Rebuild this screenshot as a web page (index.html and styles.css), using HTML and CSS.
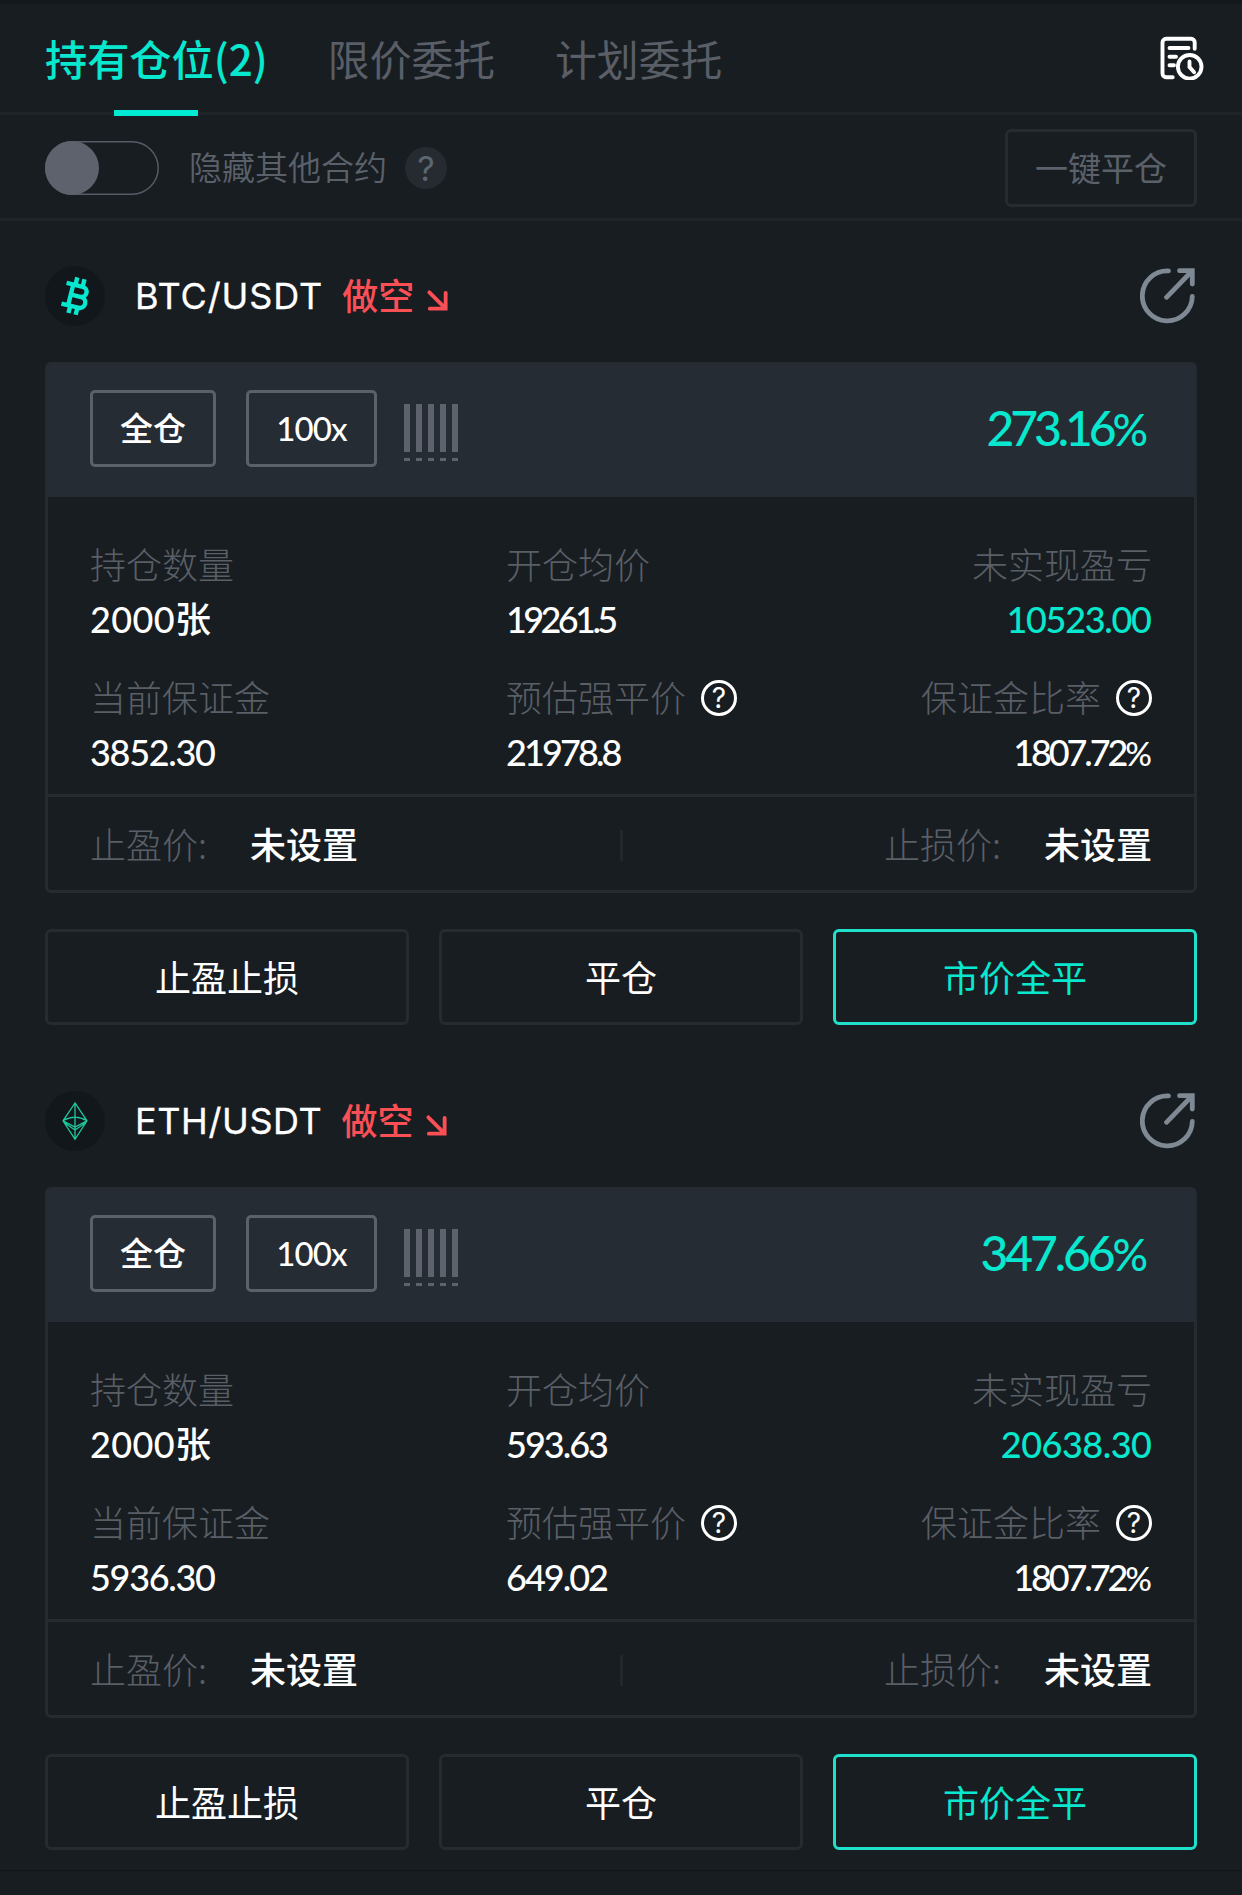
FILE: index.html
```
<!DOCTYPE html>
<html lang="zh-CN">
<head>
<meta charset="utf-8">
<title>持有仓位</title>
<link rel="stylesheet" href="styles.css">
</head>
<body>
<svg class="defs" width="0" height="0" aria-hidden="true">
  <symbol id="share" viewBox="0 0 56 56">
    <path d="M52.3 28.5A25 25 0 1 1 28.5 2.9M39.5 2.7h12.8V16M26.5 29.3L51.5 3.5"/>
  </symbol>
  <symbol id="down" viewBox="0 0 24 24">
    <path d="M3.5 3.5L20 20M20.5 4v16.5H4"/>
  </symbol>
  <symbol id="meter" viewBox="0 0 54 57">
    <path d="M3 0v48M15 0v48M27 0v48M39 0v48M51 0v48M3 54v3M15 54v3M27 54v3M39 54v3M51 54v3"/>
  </symbol>
</svg>

<header class="tabs">
  <nav class="tab-list">
    <a class="tab tab--active">持有仓位(2)</a>
    <a class="tab">限价委托</a>
    <a class="tab">计划委托</a>
  </nav>
  <svg class="history" viewBox="0 0 44 44">
    <path d="M34.7 12.8V6.4a3.6 3.6 0 0 0-3.6-3.6H6.1a3.6 3.6 0 0 0-3.6 3.6v31.2a3.6 3.6 0 0 0 3.6 3.6h6.6M9.5 12h19M9.5 20.8h6.5M9.5 29.3h4.5M29.5 25.5V31l4.6 5.3"/>
    <circle cx="29.7" cy="30.8" r="11.8"/>
  </svg>
</header>

<div class="toolbar">
  <span class="switch"><span class="knob"></span></span>
  <span class="toolbar-label">隐藏其他合约</span>
  <span class="hint">?</span>
  <button class="close-all">一键平仓</button>
</div>

<main>
  <section class="position">
    <div class="head">
      <svg class="coin" viewBox="0 0 60 60">
        <circle class="coin-bg" cx="30" cy="30" r="30"/>
        <g class="btc" transform="translate(1.2 0) rotate(14 30.5 30)">
          <path d="M17.5 19.6h16.6a5.1 5.1 0 0 1 0 10.3H25M34 29.9h1.7a5.6 5.6 0 0 1 0 11.1H17.5M24.4 19.6V41M26.6 11.8V20M34 11.8V20M26.6 40v8.4M34 40v8.4"/>
        </g>
      </svg>
      <span class="pair">BTC/USDT</span>
      <span class="side">做空</span>
      <svg class="side-arrow"><use href="#down"/></svg>
      <svg class="share"><use href="#share"/></svg>
    </div>
    <div class="card">
      <div class="card-top">
        <span class="badge">全仓</span>
        <span class="badge badge--lever">100x</span>
        <svg class="meter"><use href="#meter"/></svg>
        <span class="rate num tight-6">273.16<span class="pct">%</span></span>
      </div>
      <div class="stats">
        <div class="stat"><span class="label">持仓数量</span><span class="value num loose">2000张</span></div>
        <div class="stat"><span class="label">开仓均价</span><span class="value num tight-5">19261.5</span></div>
        <div class="stat stat--end"><span class="label">未实现盈亏</span><span class="value num gain tight-1">10523.00</span></div>
        <div class="stat"><span class="label">当前保证金</span><span class="value num tight-1">3852.30</span></div>
        <div class="stat"><span class="label">预估强平价<i class="help">?</i></span><span class="value num tight-3">21978.8</span></div>
        <div class="stat stat--end"><span class="label">保证金比率<i class="help">?</i></span><span class="value num tight-4">1807.72<span class="pct">%</span></span></div>
      </div>
      <div class="limits">
        <span class="limit-label">止盈价:</span><b class="limit-value">未设置</b>
        <i class="sep"></i>
        <span class="limit-label">止损价:</span><b class="limit-value">未设置</b>
      </div>
    </div>
    <div class="actions">
      <button class="btn">止盈止损</button>
      <button class="btn">平仓</button>
      <button class="btn btn--primary">市价全平</button>
    </div>
  </section>

  <section class="position">
    <div class="head">
      <svg class="coin" viewBox="0 0 60 60">
        <circle class="coin-bg" cx="30" cy="30" r="30"/>
        <path class="eth" d="M30 12L18 29.8L30 48.3L42 29.8ZM30 12V48.3M18 29.8Q30 22.5 42 29.8M18 29.8L30 36L42 29.8M19 31.5L30 39L41 31.5"/>
      </svg>
      <span class="pair pair--eth">ETH/USDT</span>
      <span class="side">做空</span>
      <svg class="side-arrow"><use href="#down"/></svg>
      <svg class="share"><use href="#share"/></svg>
    </div>
    <div class="card">
      <div class="card-top">
        <span class="badge">全仓</span>
        <span class="badge badge--lever">100x</span>
        <svg class="meter"><use href="#meter"/></svg>
        <span class="rate num tight-4">347.66<span class="pct">%</span></span>
      </div>
      <div class="stats">
        <div class="stat"><span class="label">持仓数量</span><span class="value num loose">2000张</span></div>
        <div class="stat"><span class="label">开仓均价</span><span class="value num tight-2">593.63</span></div>
        <div class="stat stat--end"><span class="label">未实现盈亏</span><span class="value num gain tight-0">20638.30</span></div>
        <div class="stat"><span class="label">当前保证金</span><span class="value num tight-1">5936.30</span></div>
        <div class="stat"><span class="label">预估强平价<i class="help">?</i></span><span class="value num tight-2">649.02</span></div>
        <div class="stat stat--end"><span class="label">保证金比率<i class="help">?</i></span><span class="value num tight-4">1807.72<span class="pct">%</span></span></div>
      </div>
      <div class="limits">
        <span class="limit-label">止盈价:</span><b class="limit-value">未设置</b>
        <i class="sep"></i>
        <span class="limit-label">止损价:</span><b class="limit-value">未设置</b>
      </div>
    </div>
    <div class="actions">
      <button class="btn">止盈止损</button>
      <button class="btn">平仓</button>
      <button class="btn btn--primary">市价全平</button>
    </div>
  </section>
</main>
<footer class="bottom"></footer>
</body>
</html>
```
FILE: styles.css
```
:root {
  --bg: #181d21;
  --panel: #262c33;
  --line: #262b31;
  --muted: #5a5f67;
  --muted-2: #5b616b;
  --teal: #07e8cf;
  --red: #fb4f56;
  --cjk: "Noto Sans CJK SC", sans-serif;
}
* { box-sizing: border-box; }
body {
  margin: 0;
  background: var(--bg);
  color: #fff;
  font-family: var(--cjk);
  font-size: 36px;
  border-top: 4px solid #14181c;
  height: 1895px;
  overflow: hidden;
}
button { font: inherit; background: none; padding: 0; }
i { font-style: normal; }
svg { fill: none; flex: none; }
.defs { position: absolute; }

.tabs {
  display: flex;
  align-items: center;
  justify-content: space-between;
  height: 111px;
  padding: 0 38px 0 45px;
  border-bottom: 3px solid #1f2429;
}
.tab-list { display: flex; gap: 60px; height: 100%; }
.tab {
  position: relative;
  font-size: 41.8px;
  line-height: 108px;
  color: #595e67;
}
.tab--active { font-size: 42.2px; color: var(--teal); font-weight: 500; }
.tab--active::after {
  content: "";
  position: absolute;
  left: 69px;
  bottom: -4px;
  width: 84px;
  height: 6px;
  background: #00ebd2;
}
.history { width: 44px; height: 44px; stroke: #fff; stroke-width: 3.9; stroke-linecap: round; }

.toolbar {
  display: flex;
  align-items: center;
  height: 106px;
  padding: 3px 45px 0;
  border-bottom: 3px solid #1f2429;
}
.switch {
  width: 114px;
  height: 54px;
  border-radius: 27px;
  box-shadow: inset 0 0 0 1.5px #565c66;
}
.knob { display: block; width: 54px; height: 54px; border-radius: 50%; background: #5d626d; }
.toolbar-label { margin: -5px 0 0 30px; font-size: 33px; line-height: 50px; color: var(--muted-2); font-weight: 350; }
.hint {
  width: 42px;
  height: 42px;
  margin-left: 18px;
  border-radius: 50%;
  background: #262b31;
  color: #5b6670;
  font: 34px/43px Inter, sans-serif;
  text-align: center;
}
.close-all {
  width: 192px;
  height: 78px;
  margin-left: auto;
  border: 3px solid var(--line);
  border-radius: 6px;
  color: var(--muted-2);
  font-size: 33px;
  line-height: 66px;
  padding-bottom: 2px;
}

.position { padding: 45px 45px 0; }
.position + .position { padding-top: 66px; }
.head { display: flex; align-items: center; height: 60px; }
.coin { width: 60px; height: 60px; }
.coin-bg { fill: #12171b; }
.btc { stroke: var(--teal); stroke-width: 4.4; }
.eth { stroke: #20c79e; stroke-width: 1.3; }
.pair { margin-left: 30px; font: 400 36px/60px Inter, sans-serif; letter-spacing: 0.9px; -webkit-text-stroke: 0.3px; }
.pair--eth { letter-spacing: 0.6px; }
.side { margin: -4px 0 0 19px; color: var(--red); font-weight: 500; line-height: 60px; }
.side-arrow { width: 23px; height: 23px; margin: 9px 0 0 12px; stroke: var(--red); stroke-width: 4; stroke-linecap: round; }
.share { width: 56px; height: 56px; margin: 0 1px 0 auto; stroke: #7e8994; stroke-width: 4.8; stroke-linecap: round; }

.card { margin-top: 36px; border: 3px solid var(--line); border-radius: 6px; }
.card-top {
  display: flex;
  align-items: center;
  height: 132px;
  padding: 0 45px 0 42px;
  background: var(--panel);
}
.badge {
  width: 126px;
  height: 77px;
  margin-top: -5px;
  border: 3px solid #5b616b;
  border-radius: 5px;
  font-size: 33px;
  font-weight: 500;
  line-height: 69px;
  text-align: center;
}
.badge--lever { width: 131px; margin-left: 30px; font-family: Lato, sans-serif; font-size: 33px; line-height: 70px; letter-spacing: -0.9px; }
.meter { width: 54px; height: 57px; margin: 3px 0 0 27px; stroke: #5d626d; stroke-width: 6; }
.num { font-family: Lato, "Noto Sans CJK SC", sans-serif; letter-spacing: var(--ls, 0); margin-right: calc(var(--ls, 0px) * -1); font-weight: 500; }
.pct { font-size: 0.92em; line-height: 1; }
.rate { margin: -7px 2px 0 auto; font-size: 48px; color: var(--teal); }
.loose { --ls: 0.4px; }
.tight-0 { --ls: -0.5px; }
.tight-1 { --ls: -1.3px; }
.tight-2 { --ls: -2px; }
.tight-3 { --ls: -2.9px; }
.tight-4 { --ls: -3.1px; }
.tight-5 { --ls: -3.6px; }
.tight-6 { --ls: -4.1px; }
.rate.num { margin-right: calc(var(--ls) * -1 + 1px); }

.stats {
  display: grid;
  grid-template-columns: 416px auto 1fr;
  row-gap: 23px;
  height: 297px;
  padding: 40px 42px 14px;
}
.stat { display: flex; flex-direction: column; align-items: flex-start; }
.stat--end { align-items: flex-end; }
.label { display: flex; align-items: center; height: 54px; line-height: 50px; padding-bottom: 3px; font-weight: 300; color: var(--muted); }
.value { line-height: 56px; height: 56px; }
.gain { color: var(--teal); }
.help {
  width: 36px;
  height: 36px;
  margin: 4px 0 0 15px;
  border: 3px solid #fff;
  border-radius: 50%;
  color: #fff;
  font: 400 28px/30px Inter, sans-serif;
  text-align: center;
}

.limits {
  display: flex;
  align-items: center;
  height: 96px;
  padding: 0 42px;
  border-top: 3px solid var(--line);
}
.limit-label { margin-top: -1px; color: var(--muted); font-weight: 300; line-height: 90px; }
.limit-value { margin: -1px 0 0 43px; font-weight: 500; line-height: 90px; }
.sep { width: 3px; height: 31px; margin: 4px auto 0; background: #22272d; }

.actions { display: grid; grid-template-columns: repeat(3, 1fr); gap: 30px; margin-top: 36px; }
.btn { height: 96px; border: 3px solid var(--line); border-radius: 6px; color: #fff; line-height: 84px; padding-bottom: 3px; }
.btn--primary { border-color: #1fe0cb; color: var(--teal); }
.bottom { margin-top: 20px; height: 25px; border-top: 1px solid #111519; }
```
